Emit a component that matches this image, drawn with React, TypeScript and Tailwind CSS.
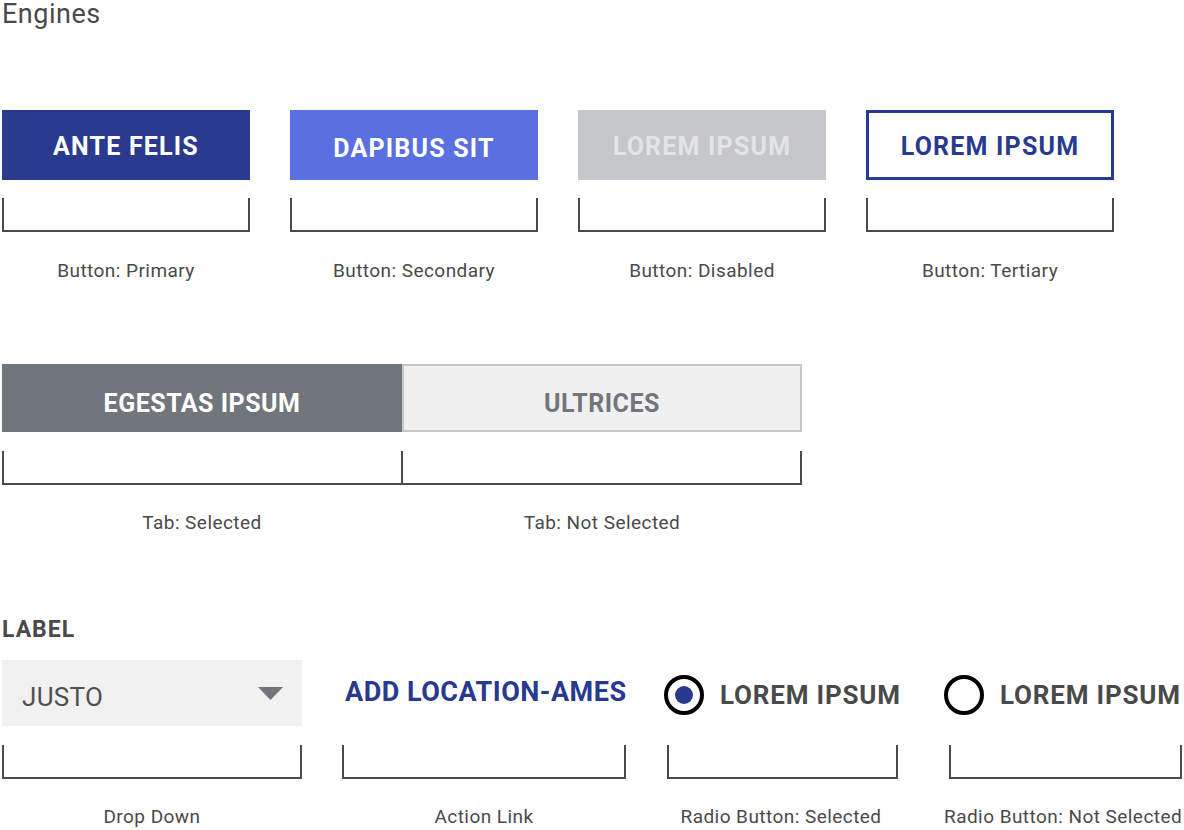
import React from 'react';

const font = { fontFamily: 'Roboto, "Liberation Sans", sans-serif' };

function Bracket({ className = '', tick = false }: { className?: string; tick?: boolean }) {
  return (
    <div className={`relative h-[34px] border-l-2 border-r-2 border-b-2 border-[#4a4a4a] ${className}`}>
      {tick && <div className="absolute left-1/2 top-0 bottom-0 w-[2px] -translate-x-1/2 bg-[#4a4a4a]" />}
    </div>
  );
}

function Caption({ children }: { children: React.ReactNode }) {
  return (
    <div className="h-5 whitespace-nowrap text-center text-[19px] leading-5 tracking-[0.45px] text-[#4a4a4a]">
      {children}
    </div>
  );
}

function Radio({ selected }: { selected: boolean }) {
  return (
    <div className="flex h-10 w-10 shrink-0 items-center justify-center rounded-full border-4 border-black">
      {selected && <div className="h-[18px] w-[18px] rounded-full bg-[#283a8f]" />}
    </div>
  );
}

export default function App() {
  return (
    <div className="min-h-screen w-[1184px] bg-white pl-[2px]" style={font}>
      <h1 className="text-[27px] leading-[28px] tracking-[0.5px] text-[#4a4a4a]">Engines</h1>

      {/* Buttons */}
      <div className="mt-[82px] flex gap-10">
        <div className="w-[248px]">
          <button className="flex h-[70px] w-full items-center justify-center bg-[#2a3a8e] pt-1 text-[25px] font-bold tracking-[1.2px] text-white">
            ANTE FELIS
          </button>
          <Bracket className="mt-[18px]" />
          <div className="mt-[29px]"><Caption>Button: Primary</Caption></div>
        </div>
        <div className="w-[248px]">
          <button className="flex h-[70px] w-full items-center justify-center bg-[#5a70e0] pt-2 text-[25px] font-bold tracking-[1.2px] text-white">
            DAPIBUS SIT
          </button>
          <Bracket className="mt-[18px]" />
          <div className="mt-[29px]"><Caption>Button: Secondary</Caption></div>
        </div>
        <div className="w-[248px]">
          <button className="flex h-[70px] w-full items-center justify-center bg-[#c5c7ca] pt-1 text-[25px] font-bold tracking-[1.2px] text-[#e3e4e6]">
            LOREM IPSUM
          </button>
          <Bracket className="mt-[18px]" />
          <div className="mt-[29px]"><Caption>Button: Disabled</Caption></div>
        </div>
        <div className="w-[248px]">
          <button className="flex h-[70px] w-full items-center justify-center border-[3px] border-[#283a8f] bg-white pt-1 text-[25px] font-bold tracking-[1.2px] text-[#283a8f]">
            LOREM IPSUM
          </button>
          <Bracket className="mt-[18px]" />
          <div className="mt-[29px]"><Caption>Button: Tertiary</Caption></div>
        </div>
      </div>

      {/* Tabs */}
      <div className="mt-[83px] w-[800px]">
        <div className="flex h-[68px]">
          <div className="flex w-[400px] items-center justify-center bg-[#71757c] pt-3 text-[25px] font-bold tracking-[0.5px] text-white">
            EGESTAS IPSUM
          </div>
          <div className="flex w-[400px] items-center justify-center border-2 border-[#c4c6c9] bg-[#f0f0f0] pt-3 text-[25px] font-bold tracking-[0.5px] text-[#71757c]">
            ULTRICES
          </div>
        </div>
        <Bracket className="mt-[19px]" tick />
        <div className="mt-[28px] flex">
          <div className="w-[400px]"><Caption>Tab: Selected</Caption></div>
          <div className="w-[400px]"><Caption>Tab: Not Selected</Caption></div>
        </div>
      </div>

      {/* Form controls */}
      <div className="mt-[87px] h-5 text-[23px] font-bold leading-5 tracking-[1px] text-[#4a4a4a]">LABEL</div>
      <div className="mt-5 flex">
        <div className="w-[300px]">
          <div className="flex h-[66px] items-center justify-between bg-[#f1f1f1] pl-5 pr-[19px]">
            <span className="pt-2 text-[26px] tracking-[0.3px] text-[#4f4f4f]">JUSTO</span>
            <svg width="25" height="13" viewBox="0 0 25 13">
              <polygon points="0,0 25,0 12.5,13" fill="#71757c" />
            </svg>
          </div>
          <Bracket className="mt-[19px]" />
          <div className="mt-[28px]"><Caption>Drop Down</Caption></div>
        </div>
        <div className="ml-10 w-[284px]">
          <div className="flex h-[66px] items-center whitespace-nowrap pb-[2px] pl-[3px] text-[27px] font-bold tracking-[0.5px] text-[#283a8f]">
            ADD LOCATION-AMES
          </div>
          <Bracket className="mt-[19px]" />
          <div className="mt-[28px]"><Caption>Action Link</Caption></div>
        </div>
        <div className="ml-[38px] w-[234px]">
          <div className="flex h-[66px] items-center gap-4 pt-[4px]">
            <Radio selected />
            <span className="whitespace-nowrap text-[26px] font-bold tracking-[0.8px] text-[#4a4a4a]">LOREM IPSUM</span>
          </div>
          <Bracket className="ml-[3px] mt-[19px]" />
          <div className="mt-[28px]"><Caption>Radio Button: Selected</Caption></div>
        </div>
        <div className="ml-[46px] w-[238px]">
          <div className="flex h-[66px] items-center gap-4 pt-[4px]">
            <Radio selected={false} />
            <span className="whitespace-nowrap text-[26px] font-bold tracking-[0.8px] text-[#4a4a4a]">LOREM IPSUM</span>
          </div>
          <Bracket className="ml-[5px] mt-[19px]" />
          <div className="mt-[28px]"><Caption>Radio Button: Not Selected</Caption></div>
        </div>
      </div>
    </div>
  );
}
